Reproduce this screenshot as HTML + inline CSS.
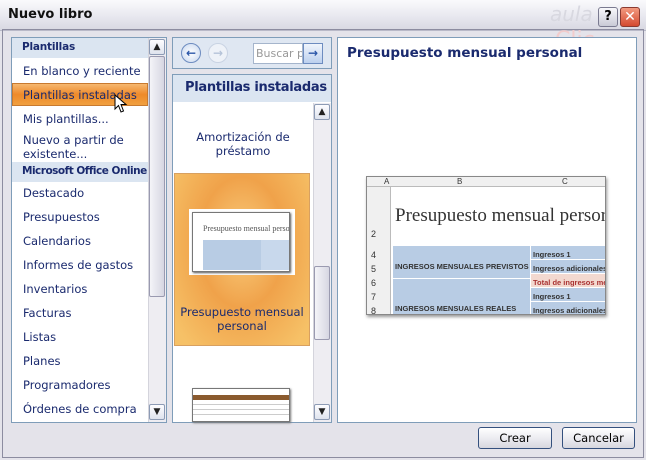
<!DOCTYPE html>
<html><head><style>
*{margin:0;padding:0;box-sizing:border-box}
body{width:646px;height:460px;overflow:hidden;background:#e4e3ea;font-family:"DejaVu Sans","Liberation Sans",sans-serif;position:relative}
.a{position:absolute;white-space:nowrap}
.title{left:0;top:0;width:646px;height:31px;background:linear-gradient(#fafafc,#e6e6ee 60%,#d8d8e2);border-bottom:1px solid #b9b9c8}
.frame{left:2px;top:29px;width:642px;height:429px;border:1px solid #8c8ca0}
.panel{background:#fff;border:1px solid #7f9db9}
.hdr{background:#dbe5f1;color:#1a2a6e;font-weight:bold;font-size:10.5px;letter-spacing:-0.2px;overflow:hidden}
.it{color:#1a2a6e;font-size:11.5px;left:23px}
.sb{background:#eeedf2;border-left:1px solid #d4d4dc}
.arr{width:16px;height:16px;border:1px solid #8d9bb5;border-radius:2px;background:linear-gradient(#fdfdff,#dfe3ee);font-size:9px;text-align:center;line-height:14px;color:#222}
.thumb{background:linear-gradient(90deg,#f4f4f8,#d6d6e2);border:1px solid #9a9ab0;border-radius:2px}
.btn{height:22px;border:1px solid #34507e;border-radius:3px;background:linear-gradient(#fff,#e8e8ee 60%,#d6d6de);font-size:11.5px;text-align:center;line-height:20px;color:#000}
</style></head><body>
<div class="a title"></div>
<div class="a" style="left:8px;top:7px;font-size:13px;font-weight:bold;color:#111">Nuevo libro</div>
<div class="a" style="left:598px;top:7px;width:20px;height:20px;border:1px solid #7a7a90;border-radius:3px;background:linear-gradient(#f8f8fb,#c9cad6);font-weight:bold;font-size:13px;text-align:center;line-height:18px">?</div>
<div class="a" style="left:620px;top:7px;width:20px;height:20px;border:1px solid #8a3a30;border-radius:3px;background:linear-gradient(#f29a80,#d44a30);color:#fff;font-weight:bold;font-size:14px;text-align:center;line-height:18px">✕</div>
<div class="a" style="left:550px;top:2px;font-size:20px;color:#d8d8e0;font-style:italic">aula</div>
<div class="a" style="left:555px;top:28px;font-size:22px;color:#f2cccc">Clic</div>
<div class="a frame"></div>

<div class="a panel" style="left:11px;top:37px;width:156px;height:386px"></div>
<div class="a hdr" style="left:12px;top:38px;width:136px;height:20px;padding:3px 10px">Plantillas</div>
<div class="a it" style="top:64px">En blanco y reciente</div>
<div class="a" style="left:12px;top:83px;width:136px;height:23px;background:linear-gradient(#f6b870,#ee8a2a 50%,#f0a040);border:1px solid #c87a30"></div>
<div class="a it" style="top:88px">Plantillas instaladas</div>
<svg class="a" style="left:114px;top:94px" width="14" height="20" viewBox="0 0 14 20"><path d="M1 1 L1 15 L4.5 11.5 L7 18 L9.5 17 L7 10.5 L12 10.5 Z" fill="#fff" stroke="#000" stroke-width="1"/></svg>
<div class="a it" style="top:112px">Mis plantillas...</div>
<div class="a it" style="top:133px;line-height:14px">Nuevo a partir de<br>existente...</div>
<div class="a hdr" style="left:12px;top:162px;width:136px;height:20px;padding:3px 0 0 10px;letter-spacing:-0.5px">Microsoft Office Online</div>
<div class="a it" style="top:186px">Destacado</div>
<div class="a it" style="top:210px">Presupuestos</div>
<div class="a it" style="top:234px">Calendarios</div>
<div class="a it" style="top:258px">Informes de gastos</div>
<div class="a it" style="top:282px">Inventarios</div>
<div class="a it" style="top:306px">Facturas</div>
<div class="a it" style="top:330px">Listas</div>
<div class="a it" style="top:354px">Planes</div>
<div class="a it" style="top:378px">Programadores</div>
<div class="a it" style="top:402px">Órdenes de compra</div>
<div class="a sb" style="left:148px;top:38px;width:18px;height:384px"></div>
<div class="a arr" style="left:149px;top:39px">▲</div>
<div class="a thumb" style="left:149px;top:56px;width:16px;height:241px"></div>
<div class="a arr" style="left:149px;top:404px">▼</div>

<div class="a" style="left:172px;top:37px;width:160px;height:32px;background:#dfe7f2;border:1px solid #7f9db9"></div>
<div class="a" style="left:181px;top:43px;width:20px;height:20px;border-radius:50%;border:1px solid #6d8cc0;background:radial-gradient(#fff,#c7d7ef);color:#2a56a8;font-size:12px;text-align:center;line-height:18px;font-weight:bold">←</div>
<div class="a" style="left:208px;top:43px;width:20px;height:20px;border-radius:50%;border:1px solid #c9d3e3;background:#eef2f8;color:#b5c3d8;font-size:12px;text-align:center;line-height:18px;font-weight:bold">→</div>
<div class="a" style="left:253px;top:43px;width:50px;height:21px;background:#fff;border:1px solid #a5b5cc;font-size:11px;color:#999;padding:3px 2px;overflow:hidden">Buscar p</div>
<div class="a" style="left:303px;top:43px;width:20px;height:21px;border:1px solid #6d8cc0;background:linear-gradient(#f0f5fc,#bcd0ee);color:#2a56a8;font-weight:bold;font-size:12px;text-align:center;line-height:19px">→</div>

<div class="a panel" style="left:172px;top:74px;width:160px;height:349px"></div>
<div class="a hdr" style="left:173px;top:75px;width:158px;height:27px;font-size:13px;letter-spacing:-0.3px;padding:5px 0 0 12px">Plantillas instaladas</div>
<div class="a" style="left:173px;top:130px;width:140px;text-align:center;font-size:11.5px;color:#1a2a6e;line-height:14px">Amortización de<br>préstamo</div>
<div class="a" style="left:174px;top:173px;width:136px;height:173px;border:1px solid #d8a060;background:radial-gradient(ellipse at 50% 40%,#f9ce7e,#f0a24a 45%,#f6c167 90%)"></div>
<div class="a" style="left:189px;top:209px;width:106px;height:66px;background:#fff"></div>
<div class="a" style="left:192px;top:212px;width:98px;height:60px;background:#fff;border:1px solid #777;box-shadow:1px 1px 2px #555;overflow:hidden">
<div style="font-family:'Liberation Serif',serif;font-size:8px;color:#555;padding:11px 0 0 10px;white-space:nowrap;overflow:hidden">Presupuesto mensual personal</div>
<div style="position:absolute;left:10px;top:27px;width:58px;height:30px;background:#b8cce4"></div>
<div style="position:absolute;left:68px;top:27px;width:30px;height:30px;background:#c8d8ec"></div></div>
<div class="a" style="left:174px;top:305px;width:136px;text-align:center;font-size:11.5px;color:#1a2a6e;line-height:14px">Presupuesto mensual<br>personal</div>
<div class="a" style="left:192px;top:388px;width:98px;height:34px;background:#fff;border:1px solid #777;box-shadow:1px 1px 2px #777">
<div style="margin-top:6px;height:5px;background:#8a5a2e"></div>
<div style="height:1px;margin-top:4px;background:#ccc"></div><div style="height:1px;margin-top:4px;background:#ccc"></div><div style="height:1px;margin-top:4px;background:#ccc"></div></div>
<div class="a sb" style="left:313px;top:103px;width:18px;height:319px"></div>
<div class="a arr" style="left:314px;top:104px">▲</div>
<div class="a thumb" style="left:314px;top:266px;width:16px;height:74px"></div>
<div class="a arr" style="left:314px;top:404px">▼</div>

<div class="a panel" style="left:337px;top:37px;width:300px;height:386px"></div>
<div class="a" style="left:347px;top:45px;font-size:13.5px;font-weight:bold;color:#1a2a6e">Presupuesto mensual personal</div>
<div class="a" style="left:366px;top:176px;width:240px;height:139px;background:#fff;border:1px solid #888;box-shadow:1px 2px 3px #999;overflow:hidden;font-family:'Liberation Sans',sans-serif">
<div style="position:absolute;left:0;top:0;width:240px;height:10px;background:#f0f0f0;border-bottom:1px solid #bbb;font-size:8px;color:#333"><span style="position:absolute;left:17px">A</span><span style="position:absolute;left:90px">B</span><span style="position:absolute;left:195px">C</span></div>
<div style="position:absolute;left:0;top:10px;width:24px;height:130px;background:#f0f0f0;border-right:1px solid #bbb"></div>
<div style="position:absolute;left:28px;top:28px;font-family:'Liberation Serif',serif;font-size:19px;color:#333;white-space:nowrap">Presupuesto mensual persor</div>
<div style="position:absolute;left:4px;top:52px;font-size:9px;color:#333">2</div>
<div style="position:absolute;left:26px;top:69px;width:137px;height:32px;background:#b8cce4"></div>
<div style="position:absolute;left:26px;top:102px;width:137px;height:37px;background:#b8cce4"></div>
<div style="position:absolute;left:164px;top:69px;width:76px;height:13px;background:#b8cce4"></div>
<div style="position:absolute;left:164px;top:83px;width:76px;height:13px;background:#b8cce4"></div>
<div style="position:absolute;left:164px;top:97px;width:76px;height:13px;background:#f3d9d0"></div>
<div style="position:absolute;left:164px;top:111px;width:76px;height:13px;background:#b8cce4"></div>
<div style="position:absolute;left:164px;top:125px;width:76px;height:14px;background:#b8cce4"></div>
<div style="position:absolute;left:4px;top:71px;font-size:9px;line-height:14px;color:#333">4<br>5<br>6<br>7<br>8</div>
<div style="position:absolute;left:166px;top:71px;font-size:7.5px;line-height:14px;color:#333;font-weight:bold;white-space:nowrap">Ingresos 1<br>Ingresos adicionales<br><span style="color:#a33">Total de ingresos me</span><br>Ingresos 1<br>Ingresos adicionales</div>
<div style="position:absolute;left:28px;top:85px;font-size:7.5px;font-weight:bold;color:#333">INGRESOS MENSUALES PREVISTOS</div>
<div style="position:absolute;left:28px;top:127px;font-size:7.5px;font-weight:bold;color:#333">INGRESOS MENSUALES REALES</div>
</div>

<div class="a btn" style="left:478px;top:427px;width:74px">Crear</div>
<div class="a btn" style="left:562px;top:427px;width:73px">Cancelar</div>
</body></html>
